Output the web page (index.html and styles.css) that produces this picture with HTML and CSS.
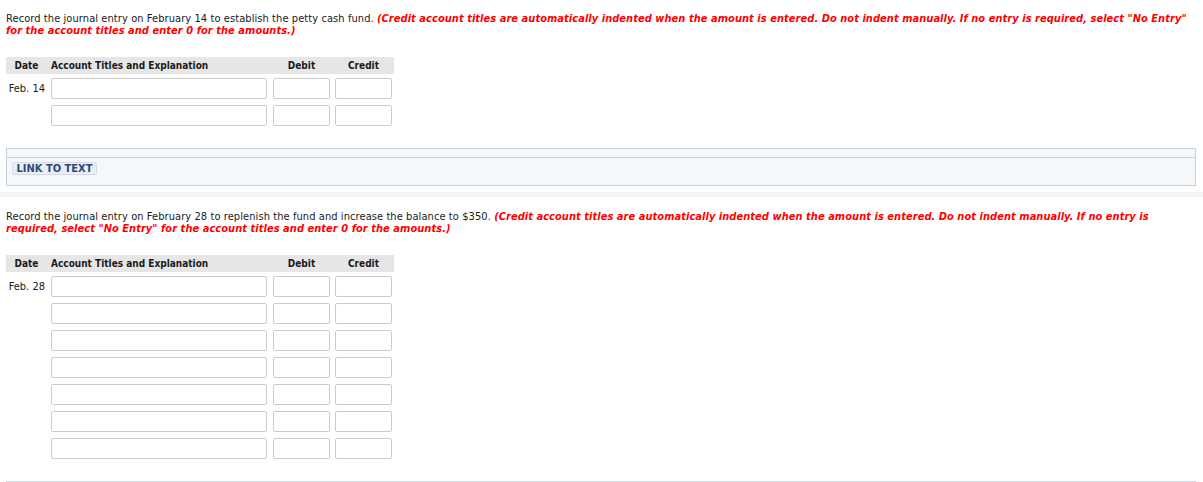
FILE: index.html
```html
<!DOCTYPE html>
<html lang="en">
<head>
<meta charset="utf-8">
<title>Journal Entries</title>
<link rel="stylesheet" href="styles.css">
</head>
<body>
<div class="page">
  <p class="prompt">Record the journal entry on February 14 to establish the petty cash fund. <span class="note">(Credit account titles are automatically indented when the amount is entered. Do not indent manually. If no entry is required, select "No Entry" for the account titles and enter 0 for the amounts.)</span></p>

  <div class="journal">
    <div class="jhead">
      <div class="c-date">Date</div>
      <div class="c-acct">Account Titles and Explanation</div>
      <div class="c-debit">Debit</div>
      <div class="c-credit">Credit</div>
    </div>
    <div class="jrow">
      <div class="c-date d">Feb. 14</div>
      <div class="c-acct"><input class="field" type="text"></div>
      <div class="c-debit"><input class="field" type="text"></div>
      <div class="c-credit"><input class="field" type="text"></div>
    </div>
    <div class="jrow">
      <div class="c-date d"></div>
      <div class="c-acct"><input class="field" type="text"></div>
      <div class="c-debit"><input class="field" type="text"></div>
      <div class="c-credit"><input class="field" type="text"></div>
    </div>
  </div>

  <div class="linkbox">
    <div class="linkbox-top"></div>
    <div class="linkbox-body"><button class="linkbtn" type="button">LINK TO TEXT</button></div>
  </div>
  <div class="band"></div>

  <p class="prompt second">Record the journal entry on February 28 to replenish the fund and increase the balance to $350. <span class="note">(Credit account titles are automatically indented when the amount is entered. Do not indent manually. If no entry is required, select "No Entry" for the account titles and enter 0 for the amounts.)</span></p>

  <div class="journal">
    <div class="jhead">
      <div class="c-date">Date</div>
      <div class="c-acct">Account Titles and Explanation</div>
      <div class="c-debit">Debit</div>
      <div class="c-credit">Credit</div>
    </div>
    <div class="jrow">
      <div class="c-date d">Feb. 28</div>
      <div class="c-acct"><input class="field" type="text"></div>
      <div class="c-debit"><input class="field" type="text"></div>
      <div class="c-credit"><input class="field" type="text"></div>
    </div>
    <div class="jrow">
      <div class="c-date d"></div>
      <div class="c-acct"><input class="field" type="text"></div>
      <div class="c-debit"><input class="field" type="text"></div>
      <div class="c-credit"><input class="field" type="text"></div>
    </div>
    <div class="jrow">
      <div class="c-date d"></div>
      <div class="c-acct"><input class="field" type="text"></div>
      <div class="c-debit"><input class="field" type="text"></div>
      <div class="c-credit"><input class="field" type="text"></div>
    </div>
    <div class="jrow">
      <div class="c-date d"></div>
      <div class="c-acct"><input class="field" type="text"></div>
      <div class="c-debit"><input class="field" type="text"></div>
      <div class="c-credit"><input class="field" type="text"></div>
    </div>
    <div class="jrow">
      <div class="c-date d"></div>
      <div class="c-acct"><input class="field" type="text"></div>
      <div class="c-debit"><input class="field" type="text"></div>
      <div class="c-credit"><input class="field" type="text"></div>
    </div>
    <div class="jrow">
      <div class="c-date d"></div>
      <div class="c-acct"><input class="field" type="text"></div>
      <div class="c-debit"><input class="field" type="text"></div>
      <div class="c-credit"><input class="field" type="text"></div>
    </div>
    <div class="jrow">
      <div class="c-date d"></div>
      <div class="c-acct"><input class="field" type="text"></div>
      <div class="c-debit"><input class="field" type="text"></div>
      <div class="c-credit"><input class="field" type="text"></div>
    </div>
  </div>

  <div class="endline"></div>
</div>
</body>
</html>
```

FILE: styles.css
```css
html, body {
  margin: 0;
  padding: 0;
  background: #ffffff;
}

body {
  font-family: "DejaVu Sans Condensed", "DejaVu Sans", sans-serif;
  font-stretch: condensed;
  font-size: 11px;
  color: #1a1a1a;
}

.page {
  padding: 13px 7px 0 6px;
}

.prompt {
  margin: 0 0 20px 0;
  line-height: 12px;
  letter-spacing: 0.08px;
}

.prompt.second {
  margin-top: 14px;
}

.note {
  color: #ff0000;
  font-weight: bold;
  font-style: italic;
  letter-spacing: 0.04px;
}

.journal {
  width: 388px;
}

.jhead {
  display: flex;
  height: 17px;
  align-items: center;
  background: #e6e6e6;
  font-size: 10px;
  font-weight: bold;
  margin-bottom: 4px;
}

.jhead .c-date {
  text-align: center;
  padding-right: 4px;
}

.jhead .c-debit,
.jhead .c-credit {
  text-align: center;
}

.jrow {
  display: flex;
  align-items: center;
  height: 21px;
  margin-bottom: 6px;
}

.c-date {
  width: 45px;
  box-sizing: border-box;
}

.c-date.d {
  text-align: right;
  padding-right: 6px;
}

.c-acct {
  width: 216px;
}

.c-debit {
  width: 57px;
  margin-left: 6px;
}

.c-credit {
  width: 57px;
  margin-left: 5px;
}

.field {
  display: block;
  box-sizing: border-box;
  width: 100%;
  height: 21px;
  margin: 0;
  padding: 0 3px;
  border: 1px solid #cccccc;
  border-radius: 2px;
  background: #ffffff;
  font: inherit;
}

.linkbox {
  margin-top: 22px;
  border: 1px solid #c7d1de;
  background: #f5f8fb;
}

.linkbox-top {
  height: 8px;
  border-bottom: 1px solid #c7d1de;
}

.linkbox-body {
  height: 27px;
  padding: 4px 0 0 5px;
  box-sizing: border-box;
}

.linkbtn {
  display: block;
  height: 13px;
  width: 85px;
  margin: 0;
  padding: 0;
  border: 1px solid #d6dde6;
  border-radius: 2px;
  background: #e9eef4;
  color: #2c4a78;
  font-family: inherit;
  font-stretch: condensed;
  font-size: 11px;
  font-weight: bold;
  line-height: 11px;
  text-align: center;
}

.band {
  margin: 6px -7px 0 -6px;
  height: 5px;
  background: #f3f6f9;
}

.endline {
  margin-top: 22px;
  height: 1px;
  border-top: 1px solid #cfd5dc;
}
```
